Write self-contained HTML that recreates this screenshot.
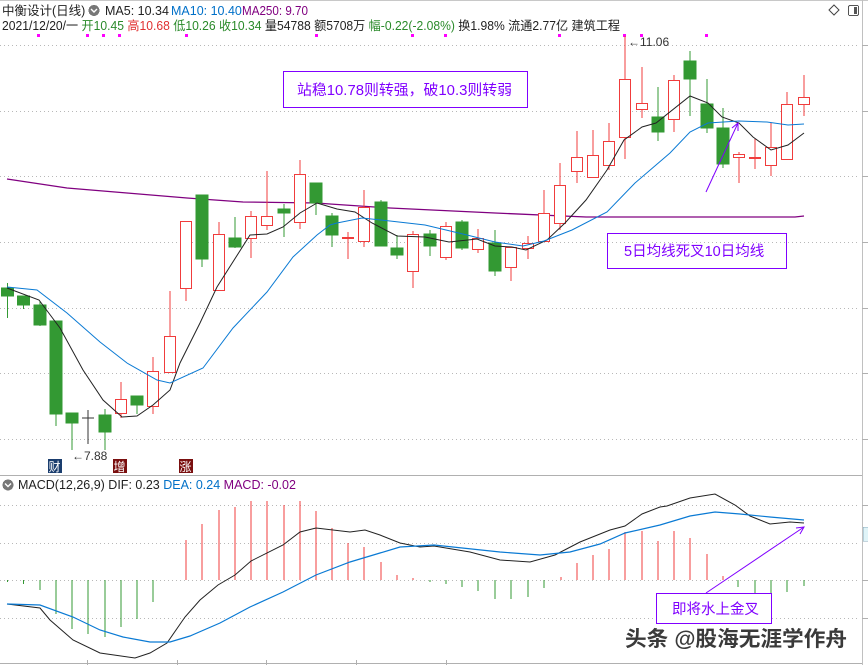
<!DOCTYPE html>
<html><head><meta charset="utf-8"><style>
html,body{margin:0;padding:0;background:#fff;width:868px;height:665px;overflow:hidden}
svg text{font-family:"Liberation Sans","Noto Sans CJK SC",sans-serif}
</style></head><body>
<svg width="868" height="665" viewBox="0 0 868 665" xmlns="http://www.w3.org/2000/svg" shape-rendering="crispEdges">
<rect width="868" height="665" fill="#fff"/>
<line x1="0" y1="0.5" x2="868" y2="0.5" stroke="#c8c8c8"/>
<line x1="862.5" y1="0" x2="862.5" y2="665" stroke="#c0c0c0"/>
<g stroke="#b8b8b8" stroke-dasharray="1,3">
<line x1="0" y1="45.5" x2="860" y2="45.5"/><line x1="0" y1="111.5" x2="860" y2="111.5"/><line x1="0" y1="176.5" x2="860" y2="176.5"/><line x1="0" y1="242.5" x2="860" y2="242.5"/><line x1="0" y1="308.5" x2="860" y2="308.5"/><line x1="0" y1="373.5" x2="860" y2="373.5"/><line x1="0" y1="439.5" x2="860" y2="439.5"/>
<line x1="0" y1="505.5" x2="860" y2="505.5"/><line x1="0" y1="543.5" x2="860" y2="543.5"/><line x1="0" y1="580.5" x2="860" y2="580.5"/><line x1="0" y1="618.5" x2="860" y2="618.5"/>
</g>
<g stroke="#b0b0b0"><line x1="862" y1="45.5" x2="868" y2="45.5"/><line x1="862" y1="111.5" x2="868" y2="111.5"/><line x1="862" y1="176.5" x2="868" y2="176.5"/><line x1="862" y1="242.5" x2="868" y2="242.5"/><line x1="862" y1="308.5" x2="868" y2="308.5"/><line x1="862" y1="373.5" x2="868" y2="373.5"/><line x1="862" y1="439.5" x2="868" y2="439.5"/>
<line x1="862" y1="505.5" x2="868" y2="505.5"/><line x1="862" y1="580.5" x2="868" y2="580.5"/><line x1="862" y1="618.5" x2="868" y2="618.5"/></g>
<line x1="0" y1="475.5" x2="862" y2="475.5" stroke="#b0b0b0"/>
<line x1="0" y1="663.5" x2="862" y2="663.5" stroke="#b0b0b0"/>
<g stroke="#b0b0b0"><line x1="87.5" y1="660" x2="87.5" y2="665"/><line x1="177.5" y1="660" x2="177.5" y2="665"/><line x1="266.5" y1="660" x2="266.5" y2="665"/><line x1="356.5" y1="660" x2="356.5" y2="665"/><line x1="446.5" y1="660" x2="446.5" y2="665"/></g>
<rect x="863" y="527" width="5" height="14" fill="#e0f4f8" stroke="#8ab" stroke-width="0.5"/>
<!-- header -->
<text x="2" y="15" font-size="12.5" fill="#222">中衡设计(日线)</text>
<circle cx="94" cy="10.5" r="5.5" fill="#777"/><path d="M91 9 L94 12 L97 9" stroke="#fff" stroke-width="1.4" fill="none" shape-rendering="auto"/>
<text x="105" y="15" font-size="12.5" fill="#222">MA5: 10.34</text>
<text x="171" y="15" font-size="12.5" fill="#0070c8">MA10: 10.40</text>
<text x="242" y="15" font-size="12.5" fill="#800080" textLength="66" lengthAdjust="spacingAndGlyphs">MA250: 9.70</text>
<text x="2" y="30" font-size="12.5" fill="#222" textLength="618" lengthAdjust="spacingAndGlyphs">2021/12/20/一 <tspan fill="#2a8a2a">开10.45</tspan> <tspan fill="#e03030">高10.68</tspan> <tspan fill="#2a8a2a">低10.26</tspan> <tspan fill="#2a8a2a">收10.34</tspan> 量54788 额5708万 <tspan fill="#2a8a2a">幅-0.22(-2.08%)</tspan> 换1.98% 流通2.77亿 建筑工程</text>
<path d="M834 5 L839 10 L834 15 L829 10 Z" fill="none" stroke="#444" shape-rendering="auto"/>
<rect x="848.5" y="5.5" width="10" height="10" rx="1.5" fill="none" stroke="#555"/><rect x="854" y="7" width="3" height="7" fill="#555"/>
<g fill="#f0f"><rect x="37" y="34" width="3" height="3"/><rect x="86" y="34" width="3" height="3"/><rect x="102" y="34" width="3" height="3"/><rect x="118" y="34" width="3" height="3"/><rect x="185" y="34" width="3" height="3"/><rect x="315" y="34" width="3" height="3"/><rect x="411" y="34" width="3" height="3"/><rect x="444" y="34" width="3" height="3"/><rect x="558" y="34" width="3" height="3"/><rect x="623" y="34" width="3" height="3"/><rect x="640" y="34" width="3" height="3"/><rect x="705" y="34" width="3" height="3"/></g>
<!-- MA250 -->
<polyline shape-rendering="auto" fill="none" stroke="#800080" stroke-width="1.3" points="7,179 67,188 127,193 187,198 243,202 317,203 330,204 390,208 495,213 586,217 795,217 804,216"/>
<!-- candles -->
<g stroke-width="1.2">
<g stroke="#339933" fill="#339933">
<line x1="7.5" y1="283" x2="7.5" y2="318"/><rect x="1.5" y="288" width="12" height="8"/>
<line x1="23.5" y1="296" x2="23.5" y2="309"/><rect x="17.5" y="296" width="12" height="9"/>
<line x1="40" y1="301" x2="40" y2="326"/><rect x="34" y="305" width="12" height="20"/>
<line x1="56" y1="321" x2="56" y2="426"/><rect x="50" y="321" width="12" height="93"/>
<line x1="72" y1="413" x2="72" y2="450"/><rect x="66" y="413" width="12" height="10"/>
<line x1="105" y1="409" x2="105" y2="450"/><rect x="99" y="415" width="12" height="17"/>
<line x1="137" y1="396" x2="137" y2="414"/><rect x="131" y="396" width="12" height="9"/>
<line x1="202" y1="195" x2="202" y2="267"/><rect x="196" y="195" width="12" height="64"/>
<line x1="235" y1="217" x2="235" y2="248"/><rect x="229" y="238" width="12" height="9"/>
<line x1="284" y1="204" x2="284" y2="237"/><rect x="278" y="209" width="12" height="4"/>
<line x1="316" y1="183" x2="316" y2="215"/><rect x="310" y="183" width="12" height="20"/>
<line x1="332" y1="213" x2="332" y2="247"/><rect x="326" y="216" width="12" height="19"/>
<line x1="381" y1="200" x2="381" y2="246"/><rect x="375" y="202" width="12" height="44"/>
<line x1="397" y1="235" x2="397" y2="259"/><rect x="391" y="248" width="12" height="7"/>
<line x1="430" y1="230" x2="430" y2="256"/><rect x="424" y="234" width="12" height="12"/>
<line x1="462" y1="220" x2="462" y2="250"/><rect x="456" y="222" width="12" height="26"/>
<line x1="495" y1="230" x2="495" y2="276"/><rect x="489" y="243" width="12" height="28"/>
<line x1="658" y1="87" x2="658" y2="141"/><rect x="652" y="117" width="12" height="15"/>
<line x1="690" y1="51" x2="690" y2="116"/><rect x="684" y="61" width="12" height="18"/>
<line x1="707" y1="79" x2="707" y2="133"/><rect x="701" y="104" width="12" height="24"/>
<line x1="723" y1="108" x2="723" y2="168"/><rect x="717" y="128" width="12" height="36"/>
</g>
<g stroke="#333"><line x1="88" y1="410" x2="88" y2="444"/><line x1="82" y1="418" x2="94" y2="418"/></g>
<g stroke="#f03c3c" fill="#fff">
<line x1="121" y1="382" x2="121" y2="418"/><rect x="115.5" y="399.5" width="11" height="14"/>
<line x1="153" y1="357" x2="153" y2="414"/><rect x="147.5" y="371.5" width="11" height="35"/>
<line x1="170" y1="291" x2="170" y2="372"/><rect x="164.5" y="336.5" width="11" height="36"/>
<line x1="186" y1="288" x2="186" y2="301"/><rect x="180.5" y="221.5" width="11" height="67"/>
<line x1="219" y1="222" x2="219" y2="290"/><rect x="213.5" y="234.5" width="11" height="56"/>
<line x1="251" y1="211" x2="251" y2="258"/><rect x="245.5" y="216.5" width="11" height="22"/>
<line x1="267" y1="171" x2="267" y2="230"/><rect x="261.5" y="216.5" width="11" height="9"/>
<line x1="300" y1="160" x2="300" y2="229"/><rect x="294.5" y="174.5" width="11" height="48"/>
<line x1="348" y1="232" x2="348" y2="259"/><line x1="342" y1="238" x2="354" y2="238" stroke-width="2"/>
<line x1="364" y1="190" x2="364" y2="247"/><rect x="358.5" y="207.5" width="11" height="34"/>
<line x1="413" y1="231" x2="413" y2="288"/><rect x="407.5" y="234.5" width="11" height="37"/>
<line x1="446" y1="222" x2="446" y2="260"/><rect x="440.5" y="226.5" width="11" height="31"/>
<line x1="478" y1="229" x2="478" y2="253"/><rect x="472.5" y="238.5" width="11" height="11"/>
<line x1="511" y1="247" x2="511" y2="281"/><rect x="505.5" y="247.5" width="11" height="20"/>
<line x1="528" y1="236" x2="528" y2="259"/><rect x="522.5" y="243.5" width="11" height="5"/>
<line x1="544" y1="190" x2="544" y2="241"/><rect x="538.5" y="213.5" width="11" height="28"/>
<line x1="560" y1="163" x2="560" y2="230"/><rect x="554.5" y="185.5" width="11" height="38"/>
<line x1="577" y1="131" x2="577" y2="183"/><rect x="571.5" y="157.5" width="11" height="14"/>
<line x1="593" y1="130" x2="593" y2="177"/><rect x="587.5" y="155.5" width="11" height="22"/>
<line x1="609" y1="123" x2="609" y2="170"/><rect x="603.5" y="141.5" width="11" height="24"/>
<line x1="625" y1="36" x2="625" y2="159"/><rect x="619.5" y="79.5" width="11" height="58"/>
<line x1="642" y1="67" x2="642" y2="118"/><rect x="636.5" y="103.5" width="11" height="6"/>
<line x1="674" y1="75" x2="674" y2="132"/><rect x="668.5" y="80.5" width="11" height="39"/>
<line x1="739" y1="152" x2="739" y2="183"/><rect x="733.5" y="154.5" width="11" height="3"/>
<line x1="755" y1="139" x2="755" y2="169"/><line x1="749" y1="158" x2="761" y2="158" stroke-width="2"/>
<line x1="771" y1="123" x2="771" y2="176"/><rect x="765.5" y="147.5" width="11" height="18"/>
<line x1="787" y1="92" x2="787" y2="159"/><rect x="781.5" y="104.5" width="11" height="55"/>
<line x1="804" y1="75" x2="804" y2="116"/><rect x="798.5" y="97.5" width="11" height="7"/>
</g></g>
<!-- MA5 / MA10 -->
<g shape-rendering="auto" fill="none" stroke-width="1">
<polyline stroke="#222" points="7,288 39,300 60,328 83,370 103,400 122,417 137,416 153,405 170,390 180,363 200,323 217,287 250,235 267,234 283,227 300,213 317,203 337,209 355,212 372,223 397,236 425,237 449,242 477,239 495,246 512,247 526,250 547,240 565,223 586,200 607,170 624,140 642,127 656,123 690,96 708,103 722,117 739,123 753,137 771,150 788,145 804,133"/>
<polyline stroke="#0a7ad4" points="7,287 37,290 67,313 100,342 127,363 157,380 170,383 203,368 233,328 267,292 293,257 317,235 330,225 337,223 362,218 390,221 425,225 467,235 495,242 523,246 544,241 572,230 607,212 635,183 670,153 690,132 708,123 739,121 767,122 788,125 804,124"/>
</g>
<!-- price labels -->
<text x="628" y="46" font-size="12" fill="#333">←11.06</text>
<text x="72" y="460" font-size="12" fill="#333">←7.88</text>
<rect x="48" y="459" width="14" height="14" fill="#1a3d6e"/><text x="48.5" y="471" font-size="12" fill="#fff">财</text>
<rect x="113" y="459" width="14" height="14" fill="#7a0f0f"/><text x="113.5" y="471" font-size="12" fill="#fff">增</text>
<rect x="179" y="459" width="14" height="14" fill="#7a0f0f"/><text x="179.5" y="471" font-size="12" fill="#fff">涨</text>
<!-- annotations -->
<rect x="283.5" y="71.5" width="244" height="36" fill="none" stroke="#8000ff" stroke-width="1.2"/>
<text x="297" y="95" font-size="14.5" fill="#8000ff" textLength="215" lengthAdjust="spacingAndGlyphs">站稳10.78则转强，破10.3则转弱</text>
<rect x="607.5" y="233.5" width="179" height="35" fill="none" stroke="#8000ff" stroke-width="1.2"/>
<text x="624" y="256" font-size="14.5" fill="#8000ff">5日均线死叉10日均线</text>
<g shape-rendering="auto" stroke="#8000ff" stroke-width="1" fill="none">
<line x1="706" y1="192" x2="738" y2="123"/><path d="M732 128 L738 123 L738 131"/>
<line x1="706" y1="593" x2="804" y2="527"/><path d="M796 528 L804 527 L800 534"/>
</g>
<!-- MACD -->
<circle cx="8" cy="485" r="5.5" fill="#777"/><path d="M5 483.5 L8 486.5 L11 483.5" stroke="#fff" stroke-width="1.4" fill="none" shape-rendering="auto"/>
<text x="18" y="489" font-size="12.5" fill="#222">MACD(12,26,9) DIF: 0.23 <tspan fill="#0070c8">DEA: 0.24</tspan> <tspan fill="#800080">MACD: -0.02</tspan></text>
<g stroke="#339933" stroke-width="1.2">
<line x1="7.5" y1="580" x2="7.5" y2="582"/><line x1="23.5" y1="580" x2="23.5" y2="584"/><line x1="40" y1="580" x2="40" y2="590"/><line x1="56" y1="580" x2="56" y2="614"/><line x1="72" y1="580" x2="72" y2="629"/><line x1="88" y1="580" x2="88" y2="634"/><line x1="105" y1="580" x2="105" y2="637"/><line x1="121" y1="580" x2="121" y2="627"/><line x1="137" y1="580" x2="137" y2="619"/><line x1="153" y1="580" x2="153" y2="602"/>
<line x1="430" y1="580" x2="430" y2="582"/><line x1="446" y1="580" x2="446" y2="584"/><line x1="462" y1="580" x2="462" y2="587"/><line x1="478" y1="580" x2="478" y2="591"/><line x1="495" y1="580" x2="495" y2="599"/><line x1="511" y1="580" x2="511" y2="599"/><line x1="528" y1="580" x2="528" y2="597"/><line x1="544" y1="580" x2="544" y2="588"/>
<line x1="738" y1="580" x2="738" y2="587"/><line x1="755" y1="580" x2="755" y2="597"/><line x1="771" y1="580" x2="771" y2="600"/><line x1="787" y1="580" x2="787" y2="592"/><line x1="804" y1="580" x2="804" y2="586"/>
</g>
<g stroke="#f03c3c" stroke-width="1.2">
<line x1="186" y1="580" x2="186" y2="540"/><line x1="202" y1="580" x2="202" y2="524"/><line x1="219" y1="580" x2="219" y2="510"/><line x1="235" y1="580" x2="235" y2="507"/><line x1="251" y1="580" x2="251" y2="501"/><line x1="267" y1="580" x2="267" y2="501"/><line x1="284" y1="580" x2="284" y2="505"/><line x1="300" y1="580" x2="300" y2="501"/><line x1="316" y1="580" x2="316" y2="511"/><line x1="332" y1="580" x2="332" y2="528"/><line x1="348" y1="580" x2="348" y2="543"/><line x1="364" y1="580" x2="364" y2="547"/><line x1="381" y1="580" x2="381" y2="562"/><line x1="397" y1="580" x2="397" y2="575"/><line x1="413" y1="580" x2="413" y2="578"/>
<line x1="561" y1="580" x2="561" y2="577"/><line x1="577" y1="580" x2="577" y2="563"/><line x1="593" y1="580" x2="593" y2="555"/><line x1="609" y1="580" x2="609" y2="549"/><line x1="625" y1="580" x2="625" y2="532"/><line x1="642" y1="580" x2="642" y2="531"/><line x1="658" y1="580" x2="658" y2="541"/><line x1="674" y1="580" x2="674" y2="531"/><line x1="690" y1="580" x2="690" y2="538"/><line x1="707" y1="580" x2="707" y2="554"/><line x1="723" y1="580" x2="723" y2="576"/>
</g>
<g shape-rendering="auto" fill="none" stroke-width="1">
<polyline stroke="#222" points="7,604 40,608 50,620 73,640 100,653 135,658 150,653 167,643 185,617 200,600 218,585 235,575 251,561 283,545 300,532 316,528 350,532 365,530 380,535 400,543 420,547 434,546 470,552 500,560 530,562 555,555 580,542 610,530 625,526 642,514 660,507 667,506 690,498 715,494 735,505 750,516 770,524 790,522 804,523"/>
<polyline stroke="#0a7ad4" stroke-width="1.2" points="7,604 40,605 73,617 100,630 123,637 150,642 170,642 190,636 220,623 250,607 283,592 316,575 350,562 380,553 400,547 434,545 500,552 540,555 570,552 600,544 625,533 660,525 690,516 715,512 740,514 770,517 804,520"/>
</g>
<rect x="656.5" y="593.5" width="115" height="30" fill="#fff" stroke="#8000ff" stroke-width="1.2"/>
<text x="672" y="614" font-size="14.5" fill="#8000ff">即将水上金叉</text>
<text x="626" y="647" font-size="21" font-weight="bold" fill="#fff" textLength="222" lengthAdjust="spacingAndGlyphs">头条 @股海无涯学作舟</text>
<text x="625" y="646" font-size="21" font-weight="bold" fill="#3a3a3a" textLength="222" lengthAdjust="spacingAndGlyphs">头条 @股海无涯学作舟</text>
</svg>
</body></html>
